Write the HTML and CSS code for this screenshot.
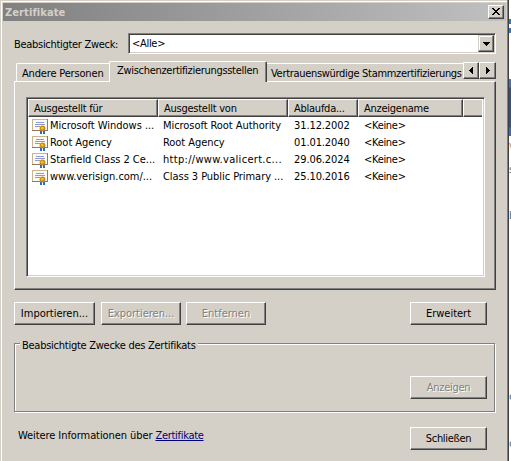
FILE: index.html
```html
<!DOCTYPE html>
<html lang="de">
<head>
    <meta charset="UTF-8">
    <title>Zertifikate</title>
    <link rel="stylesheet" href="styles.css">
</head>
<body>
    <svg class="defs" width="0" height="0">
        <symbol id="cert" viewBox="0 0 16 16">
            <path fill="#8c7a60" d="M0 1h16v12H0z"/>
            <path fill="#c8b690" d="M0 1h15v1H1v10H0z"/>
            <path fill="#fbfaf6" d="M1 2h14v10H1z"/>
            <path fill="#8e9ad0" d="M4 4h8v1H4zM3 6h10v1H3zM3 8h5v1H3z"/>
            <path fill="#2868d8" d="M8 12h2v4H8zM11 12h2v4h-2z"/>
            <circle cx="10.5" cy="10.5" r="2.9" fill="#c88a10"/>
            <circle cx="10.3" cy="10.2" r="1.4" fill="#f4bc30"/>
        </symbol>
    </svg>

    <div class="window">
        <div class="titlebar">
            <span class="title">Zertifikate</span>
            <button class="close" aria-label="Schließen">
                <svg width="8" height="7" shape-rendering="crispEdges"><path d="M0 0h2v1h1v1h2V1h1V0h2v1H7v1H6v1H5v1h1v1h1v1h1v1H6V6H5V5H3v1H2v1H0V6h1V5h1V4h1V3H2V2H1V1H0z"/></svg>
            </button>
        </div>

        <div class="purpose">
            <label>Beabsichtigter Zweck:</label>
            <div class="combo">
                <span>&lt;Alle&gt;</span>
                <button class="combo-btn" aria-label="Auswahl"><svg width="7" height="4" shape-rendering="crispEdges"><path d="M0 0h7v1H6v1H5v1H4v1H3V3H2V2H1V1H0z"/></svg></button>
            </div>
        </div>

        <div class="tabs">
            <div class="tab tab-first">Andere Personen</div>
            <div class="tab active">Zwischenzertifizierungsstellen</div>
            <div class="tab tab-last">Vertrauenswürdige Stammzertifizierungs</div>
            <div class="scroller">
                <button aria-label="Zurück"><svg width="4" height="7" shape-rendering="crispEdges"><path d="M4 0v7H3V6H2V5H1V4H0V3h1V2h1V1h1V0z"/></svg></button>
                <button aria-label="Weiter"><svg width="4" height="7" shape-rendering="crispEdges"><path d="M0 0v7h1V6h1V5h1V4h1V3H3V2H2V1H1V0z"/></svg></button>
            </div>
        </div>

        <div class="panel">
            <div class="list">
                <div class="row head">
                    <span>Ausgestellt für</span><span>Ausgestellt von</span><span>Ablaufda...</span><span>Anzeigename</span><span></span>
                </div>
                <div class="row">
                    <span class="name"><svg><use href="#cert"/></svg>Microsoft Windows ...</span><span class="issuer">Microsoft Root Authority</span><span class="date">31.12.2002</span><span>&lt;Keine&gt;</span>
                </div>
                <div class="row">
                    <span class="name"><svg><use href="#cert"/></svg>Root Agency</span><span class="issuer">Root Agency</span><span class="date">01.01.2040</span><span>&lt;Keine&gt;</span>
                </div>
                <div class="row">
                    <span class="name"><svg><use href="#cert"/></svg>Starfield Class 2 Ce...</span><span class="issuer url">http://www.valicert.c...</span><span class="date">29.06.2024</span><span>&lt;Keine&gt;</span>
                </div>
                <div class="row">
                    <span class="name"><svg><use href="#cert"/></svg>www.verisign.com/...</span><span class="issuer">Class 3 Public Primary ...</span><span class="date">25.10.2016</span><span>&lt;Keine&gt;</span>
                </div>
            </div>
        </div>

        <div class="actions">
            <button class="btn first">Importieren...</button>
            <button class="btn wide-text" disabled>Exportieren...</button>
            <button class="btn wide-text" disabled>Entfernen</button>
            <button class="btn narrow wide-text">Erweitert</button>
        </div>

        <fieldset class="group">
            <legend>Beabsichtigte Zwecke des Zertifikats</legend>
            <button class="btn narrow" disabled>Anzeigen</button>
        </fieldset>

        <div class="footer">
            <span class="info">Weitere Informationen über <a href="#">Zertifikate</a></span>
            <button class="btn narrow">Schließen</button>
        </div>
    </div>

    <!-- Rand des Fensters dahinter -->
    <div class="behind">
        <i class="bar b1"></i>
        <i class="bar b2"></i>
        <i class="banner"></i>
        <b class="orange">V</b>
        <b>s</b>
        <b class="blue low">b</b>
        <b class="blue lower">c</b>
        <b class="blue last">c</b>
    </div>
</body>
</html>
```
FILE: styles.css
```css
* {
    margin: 0;
    padding: 0;
    box-sizing: border-box;
}
body {
    display: flex;
    width: 511px;
    height: 461px;
    overflow: hidden;
    background: #fff;
    color: #000;
    font: 11px/13px "DejaVu Sans Condensed", Tahoma, sans-serif;
    letter-spacing: -0.3px;
    white-space: nowrap;
}
button {
    font: inherit;
    letter-spacing: inherit;
    color: #000;
    background: #d4d0c8;
    border: 1px solid;
    border-color: #fff #404040 #404040 #fff;
    box-shadow: inset -1px -1px #808080;
    display: flex;
    align-items: center;
    justify-content: center;
}
svg { display: block; }
.defs { position: absolute; }

.window {
    width: 509px;
    height: 461px;
    flex: none;
    padding: 3px 3px 0;
    background: #d4d0c8;
    box-shadow: inset -1px 0 #404040, inset -2px 0 #808080, inset 1px 1px #d4d0c8, inset 2px 2px #fff;
}
.titlebar {
    height: 18px;
    display: flex;
    align-items: center;
    justify-content: space-between;
    padding: 0 2px;
    background: linear-gradient(to right, #808080, #c0c0c0);
}
.title {
    color: #d4d0c8;
    font-weight: bold;
    letter-spacing: 0.1px;
}
.close {
    width: 16px;
    height: 14px;
    padding: 0 1px 1px 0;
}

.purpose {
    display: flex;
    align-items: center;
    margin: 12px 10px 0 11px;
    height: 21px;
}
.purpose label {
    width: 114px;
    padding-top: 1px;
}
.combo {
    flex: 1;
    height: 21px;
    display: flex;
    align-items: center;
    justify-content: space-between;
    padding-left: 3px;
    background: #fff;
    border: 1px solid;
    border-color: #808080 #fff #fff #808080;
    box-shadow: inset 1px 1px #404040, inset -1px -1px #d4d0c8;
}
.combo-btn {
    width: 16px;
    height: 17px;
    margin-right: 1px;
    border-color: #d4d0c8 #404040 #404040 #d4d0c8;
    box-shadow: inset -1px -1px #808080, inset 1px 1px #fff;
}

.tabs {
    display: flex;
    align-items: flex-end;
    height: 20px;
    margin: 7px 10px 0 13px;
}
.tab {
    height: 18px;
    padding: 3px 0 0 5px;
    border-top: 1px solid #fff;
    overflow: hidden;
}
.tab-first {
    width: 93px;
    border-left: 1px solid #fff;
    border-top-left-radius: 2px;
    letter-spacing: -0.17px;
}
.tab.active {
    width: 158px;
    height: 21px;
    margin-bottom: -1px;
    padding: 2px 0 0 7px;
    background: #d4d0c8;
    border-left: 1px solid #fff;
    border-right: 1px solid #404040;
    box-shadow: inset -1px 0 #808080;
    border-radius: 2px 2px 0 0;
    z-index: 1;
}
.tab-last {
    width: 196px;
    padding-left: 4px;
    letter-spacing: -0.31px;
}
.scroller {
    display: flex;
    width: 33px;
    height: 19px;
}
.scroller button {
    width: 16px;
    height: 17px;
}
.scroller button + button { width: 17px; }

.panel {
    height: 209px;
    margin: 0 10px 0 11px;
    padding: 15px 10px 0 11px;
    border: 1px solid;
    border-color: #fff #404040 #404040 #fff;
    box-shadow: inset -1px -1px #808080;
}
.list {
    height: 180px;
    padding: 1px;
    background: #fff;
    border: 1px solid;
    border-color: #808080 #fff #fff #808080;
    box-shadow: inset 1px 1px #404040, inset -1px -1px #d4d0c8;
}
.row {
    display: grid;
    grid-template-columns: 130px 130px 70px 105px 19px;
    height: 17px;
    align-items: center;
}
.row > span { padding-left: 6px; }
.row > .name {
    display: flex;
    align-items: center;
    gap: 2px;
    padding-left: 4px;
    letter-spacing: -0.03px;
}
.row > .issuer {
    padding-left: 5px;
    letter-spacing: -0.06px;
}
.row > .url { letter-spacing: 0.3px; }
.row > .date { letter-spacing: -0.1px; }
.row svg {
    width: 16px;
    height: 16px;
    flex: none;
}
.row.head {
    height: 18px;
    letter-spacing: -0.25px;
}
.head > span {
    height: 18px;
    padding-top: 2px;
    padding-left: 5px;
    background: #d4d0c8;
    border: 1px solid;
    border-color: #fff #404040 #404040 #fff;
    box-shadow: inset -1px -1px #808080;
}
.head > span:last-child {
    border-right: none;
    box-shadow: inset 0 -1px #808080;
}

.btn {
    width: 80px;
    height: 23px;
    padding-bottom: 1px;
}
.btn.first {
    width: 81px;
    letter-spacing: 0;
}
.btn.narrow { width: 77px; }
.btn.wide-text { letter-spacing: -0.02px; }
.btn:disabled {
    color: #808080;
    text-shadow: 1px 1px #fff;
}
.actions {
    display: flex;
    gap: 5px;
    margin: 12px 19px 0 11px;
}
.actions .first { margin-right: 1px; }
.actions .narrow { margin-left: auto; }

.group {
    height: 74px;
    margin: 13px 11px 0 11px;
    padding: 27px 7px 0 5px;
    border: 1px solid #808080;
    box-shadow: 1px 1px #fff, inset 1px 1px #fff;
}
.group legend {
    height: 11px;
    padding: 1px 2px 0;
    background: #d4d0c8;
    letter-spacing: -0.26px;
}
.group .btn { margin-left: auto; }

.footer {
    display: flex;
    justify-content: space-between;
    margin: 15px 19px 0 15px;
}
.info {
    padding-top: 2px;
    letter-spacing: -0.08px;
}
.info a {
    color: #000080;
    letter-spacing: -0.3px;
}

.behind {
    flex: 1;
    height: 461px;
    overflow: hidden;
    background: #fff;
}
.bar {
    display: block;
    height: 5px;
    background: #1878e8;
}
.b1 { margin-top: 19px; }
.b2 { margin-top: 4px; }
.banner {
    display: block;
    height: 57px;
    margin-top: 46px;
    background: linear-gradient(#3870d8 0 8px, #2850a0 9px 48px, #3068e0 49px);
}
.behind b {
    display: block;
    margin-top: 9px;
    font-weight: normal;
    color: #606878;
}
.behind .orange {
    margin-top: 5px;
    color: #d08830;
}
.behind .blue { color: #2870b0; }
.behind .low { margin-top: 33px; }
.behind .lower { margin-top: 168px; }
.behind .last { margin-top: 34px; }
```
